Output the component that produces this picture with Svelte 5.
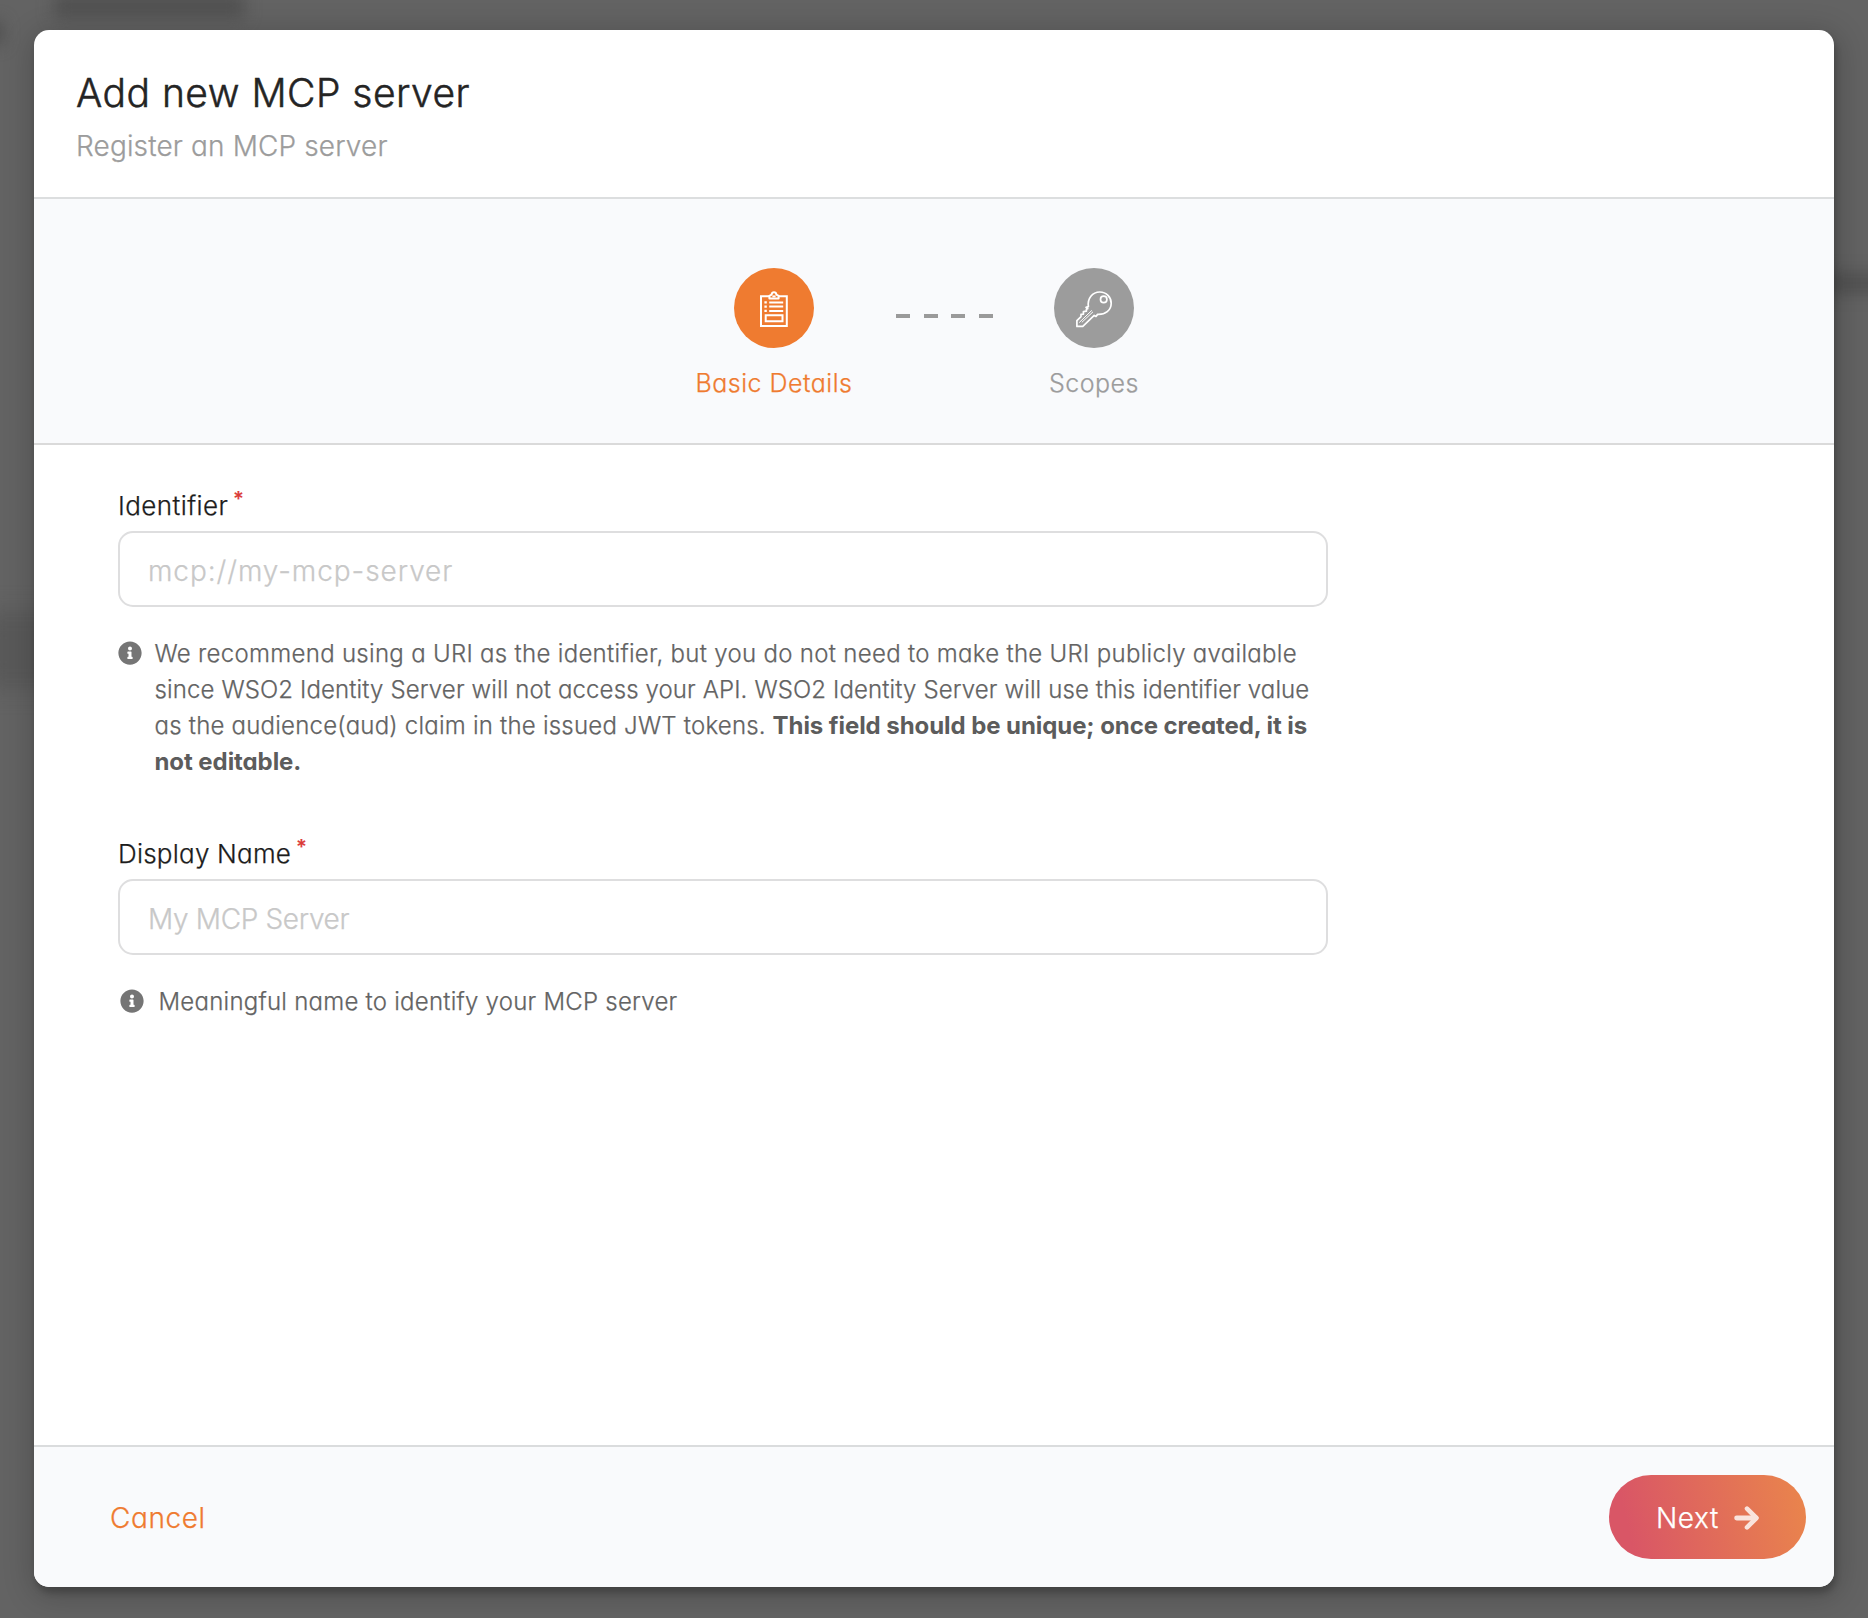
<script>
  let identifier = $state('');
  let displayName = $state('');
</script>

{#snippet info()}
  <svg class="info" viewBox="0 0 512 512" aria-hidden="true">
    <path
      fill="currentColor"
      d="M256 8C119.04 8 8 119.08 8 256c0 137 111.04 248 248 248s248-111 248-248C504 119.08 392.96 8 256 8zm0 110c23.2 0 42 18.8 42 42s-18.8 42-42 42-42-18.8-42-42 18.8-42 42-42zm56 254c0 6.63-5.37 12-12 12h-88c-6.63 0-12-5.37-12-12v-24c0-6.63 5.37-12 12-12h12v-64h-12c-6.63 0-12-5.37-12-12v-24c0-6.63 5.37-12 12-12h64c6.63 0 12 5.37 12 12v100h12c6.63 0 12 5.37 12 12v24z"
    />
  </svg>
{/snippet}

<div class="dimmer">
  <span class="smudge heading"></span>
  <span class="smudge edge"></span>
  <span class="smudge nav"></span>
  <span class="smudge row"></span>

  <div class="modal" role="dialog" aria-labelledby="title">
    <header>
      <h1 id="title">Add new MCP server</h1>
      <p>Register an MCP server</p>
    </header>

    <div class="steps">
      <div class="step active">
        <span class="circle">
          <svg viewBox="0 0 40 40" fill="none" stroke="currentColor" stroke-width="2">
            <path d="M15.2 8.2H7V38H32.8V8.2H24.6" />
            <path d="M15.4 10.4V7.8L17.6 6.6C18 3.6 22 3.6 22.4 6.6L24.6 7.8V10.4z" stroke-linejoin="round" />
            <path d="M18.4 8.4h3.2" />
            <path d="M15.2 14.4H29.2M15.2 18.6H29.2M15.2 22.9H29.2" />
            <path d="M10.4 14.4h2.4M10.4 18.6h2.4M10.4 22.9h2.4" stroke-width="2.3" />
            <path d="M11.7 27.3H28.5V33.2H11.7z" />
          </svg>
        </span>
        <span class="label">Basic Details</span>
      </div>
      <div class="connector"><i></i><i></i><i></i><i></i></div>
      <div class="step">
        <span class="circle">
          <svg viewBox="0 0 40 40" fill="none" stroke="currentColor" stroke-width="1.7" stroke-linejoin="round">
            <path
              d="M14.4 18.6C13.2 10.4 18.4 4 25.8 4C32.4 4 37.2 9 37.2 15.2C37.2 22.2 31.2 26.8 23.6 26.4L22 28.4L20.2 27.4L8.8 38.4H2.9V32.6L7 28.6V26.4L9.4 26.2V23.6L12.4 23.2V21.2L13.8 20.6L12 19.4Z"
            />
            <circle cx="29.7" cy="11.4" r="3.2" />
            <path d="M5.2 34.6L17.8 22.4M7.8 34.4L19 23.8" stroke-width="1" />
          </svg>
        </span>
        <span class="label">Scopes</span>
      </div>
    </div>

    <main>
      <div class="field">
        <label class="id" for="identifier">Identifier<sup>*</sup></label>
        <input class="mono" id="identifier" placeholder="mcp://my-mcp-server" bind:value={identifier} />
        <div class="hint">
          {@render info()}
          <p>
            <span class="l1">We recommend using a URI as the identifier, but you do not need to make the URI publicly available</span><br />
            <span class="l2">since WSO2 Identity Server will not access your API. WSO2 Identity Server will use this identifier value</span><br />
            <span class="l3">as the audience(aud) claim in the issued JWT tokens.</span>
            <strong>This field should be unique; once created, it is<br />not editable.</strong>
          </p>
        </div>
      </div>
      <div class="field">
        <label for="display-name">Display Name<sup>*</sup></label>
        <input id="display-name" placeholder="My MCP Server" bind:value={displayName} />
        <div class="hint short">
          {@render info()}
          <p>Meaningful name to identify your MCP server</p>
        </div>
      </div>
    </main>

    <footer>
      <button class="cancel">Cancel</button>
      <button class="next">
        <span>Next</span>
        <svg viewBox="0 0 26 24" fill="none" stroke="currentColor" stroke-width="4.6" stroke-linecap="round" stroke-linejoin="round">
          <path d="M2.6 12H22" stroke-width="4.8" />
          <path d="M13 2.6L22.4 12L13 21.4" />
        </svg>
      </button>
    </footer>
  </div>
</div>

<style>
  :global(body) {
    margin: 0;
    background: #636363;
  }
  .dimmer {
    position: relative;
    box-sizing: border-box;
    height: 1618px;
    padding: 30px 34px 31px;
    background: #636363;
    overflow: hidden;
    font-family: Inter, 'Open Sans', sans-serif;
    font-feature-settings: 'cv11' 1;
    font-weight: 300;
    -webkit-text-stroke: 0.25px currentColor;
  }
  .smudge {
    position: absolute;
    background: #4b4b4b;
    filter: blur(8px);
  }
  .heading { left: 54px; top: -6px; width: 190px; height: 24px; background: #515151; }
  .edge { left: -12px; top: 22px; width: 14px; height: 22px; }
  .nav { left: -20px; top: 612px; width: 80px; height: 76px; background: #595959; filter: blur(11px); }
  .row { left: 1826px; top: 273px; width: 60px; height: 20px; background: #515151; }
  .modal {
    position: relative;
    display: flex;
    flex-direction: column;
    height: 1557px;
    border-radius: 15px;
    background: #fff;
    overflow: hidden;
    box-shadow: 2px 6px 6px rgba(0, 0, 0, 0.2), 2px 6px 30px 4px rgba(0, 0, 0, 0.2);
  }
  header {
    box-sizing: border-box;
    height: 169px;
    padding: 39px 42px 0;
    border-bottom: 2px solid #dcdedf;
  }
  h1 {
    margin: 0 0 9px;
    font-size: 39px;
    line-height: 48px;
    font-weight: 300;
    -webkit-text-stroke-width: 0.5px;
    letter-spacing: 0.48px;
    color: #242424;
  }
  header p {
    margin: 0;
    font-size: 28px;
    line-height: 40px;
    letter-spacing: 0.14px;
    color: #9c9c9c;
  }
  .steps {
    box-sizing: border-box;
    display: flex;
    justify-content: center;
    height: 246px;
    padding-top: 69px;
    background: #f9fafc;
    border-bottom: 2px solid #dadada;
  }
  .step {
    display: flex;
    flex-direction: column;
    align-items: center;
    gap: 19px;
    width: 160px;
    color: #9c9c9c;
  }
  .circle {
    display: grid;
    place-items: center;
    width: 80px;
    height: 80px;
    border-radius: 50%;
    background: #9c9c9c;
    color: #fff;
  }
  .circle svg { width: 40px; height: 40px; }
  .label {
    font-size: 25px;
    line-height: 32px;
    letter-spacing: 0.5px;
    white-space: nowrap;
  }
  .active { color: #ef7b30; }
  .active .circle { background: #ef7b30; }
  .connector {
    box-sizing: border-box;
    display: flex;
    gap: 13.6px;
    width: 160px;
    padding: 46px 0 0 42px;
  }
  .connector i {
    width: 14px;
    height: 4px;
    background: #9a9a9a;
  }
  main {
    flex: 1;
    padding: 45px 84px 0;
  }
  .field {
    width: 1210px;
    margin-bottom: 58px;
  }
  label {
    display: flex;
    height: 32px;
    margin-bottom: 9px;
    font-size: 26px;
    line-height: 32px;
    letter-spacing: 0.22px;
    color: #1c1c1c;
  }
  .id { letter-spacing: 0.42px; }
  sup {
    margin-left: 5px;
    font-size: 20px;
    line-height: 18px;
    font-weight: 500;
    color: #db3b36;
  }
  input {
    display: block;
    box-sizing: border-box;
    width: 100%;
    height: 76px;
    padding: 4px 28px 0;
    border: 2px solid #dededf;
    border-radius: 15px;
    background: #fff;
    outline: none;
    font: inherit;
    font-feature-settings: inherit;
    font-size: 28px;
    letter-spacing: -0.33px;
  }
  input.mono { letter-spacing: 0.93px; }
  input::placeholder { color: #c8c8c8; opacity: 1; }
  .hint {
    display: flex;
    gap: 12.5px;
    margin-top: 29px;
    font-size: 24px;
    line-height: 36px;
    color: #636363;
  }
  .hint p { margin: 0; white-space: nowrap; }
  .info {
    flex: none;
    width: 24px;
    height: 24px;
    margin-top: 5px;
    color: #757575;
  }
  .l1 { letter-spacing: 0.3px; }
  .l2 { letter-spacing: 0.12px; }
  .l3 { letter-spacing: 0.22px; }
  strong {
    font-weight: 700;
    letter-spacing: -0.07px;
    -webkit-text-stroke-width: 0;
    color: #5c5c5c;
  }
  .short {
    gap: 14.5px;
    padding-left: 2px;
    letter-spacing: 0.24px;
  }
  footer {
    box-sizing: border-box;
    display: flex;
    justify-content: space-between;
    height: 142px;
    padding: 28px 28px 0 76px;
    border-top: 2px solid #dadcdd;
    background: #f9fafc;
  }
  button {
    height: 84px;
    padding: 2px 0 0;
    border: 0;
    background: none;
    font: inherit;
    font-feature-settings: inherit;
    font-size: 28px;
    letter-spacing: 0.6px;
  }
  .cancel { color: #ef7b30; }
  .next {
    display: flex;
    align-items: center;
    gap: 15px;
    width: 197px;
    padding-left: 47px;
    border-radius: 42px;
    background: linear-gradient(77deg, #d95666 12%, #e9834d 95%);
    color: #fff;
  }
  .next svg {
    width: 26px;
    height: 24px;
    opacity: 0.8;
  }
</style>
